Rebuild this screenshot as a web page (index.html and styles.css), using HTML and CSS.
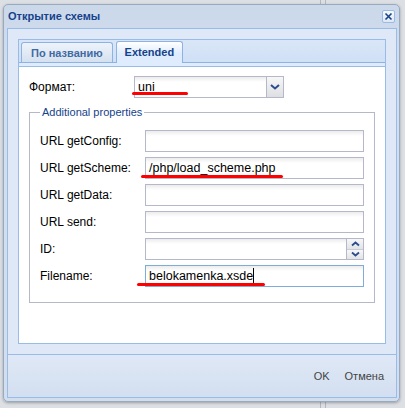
FILE: index.html
```html
<!DOCTYPE html>
<html lang="ru">
<head>
<meta charset="utf-8">
<title>Открытие схемы</title>
<link rel="stylesheet" href="styles.css">
</head>
<body>
<div class="win">
  <div class="win-hd">
    <span class="win-title">Открытие схемы</span>
    <span class="tool-close"><svg width="11" height="11" viewBox="0 0 11 11"><path d="M2.5 2.5 L8.5 8.5 M8.5 2.5 L2.5 8.5" stroke="#15428b" stroke-width="1.6" fill="none"/></svg></span>
  </div>
  <div class="win-panel">
    <div class="win-body">
      <div class="tabpanel">
        <div class="tab-hd">
          <div class="tab-strip">
            <div class="tab">По названию</div>
            <div class="tab active">Extended</div>
          </div>
          <div class="tab-spacer"></div>
        </div>
        <div class="tab-body">
          <div class="form-row">
            <span class="lbl">Формат:</span>
            <div class="combo">
              <div class="field combo-input">uni<span class="mark mark-uni"></span></div>
              <div class="trigger"><svg width="10" height="6" viewBox="0 0 10 6"><path d="M1 1 L5 4.5 L9 1" stroke="#2c4c8c" stroke-width="2" fill="none"/></svg></div>
            </div>
          </div>
          <fieldset class="fs">
            <legend>Additional properties</legend>
            <div class="fs-row"><span class="lbl">URL getConfig:</span><div class="field"></div></div>
            <div class="fs-row"><span class="lbl">URL getScheme:</span><div class="field">/php/load_scheme.php<span class="mark mark-scheme"></span></div></div>
            <div class="fs-row"><span class="lbl">URL getData:</span><div class="field"></div></div>
            <div class="fs-row"><span class="lbl">URL send:</span><div class="field"></div></div>
            <div class="fs-row"><span class="lbl">ID:</span>
              <div class="spin">
                <div class="field spin-input"></div>
                <div class="spin-btns">
                  <div class="spin-btn"><svg width="9" height="6" viewBox="0 0 9 6"><path d="M1 4.5 L4.5 1.5 L8 4.5" stroke="#2c4c8c" stroke-width="1.8" fill="none"/></svg></div>
                  <div class="spin-btn down"><svg width="9" height="6" viewBox="0 0 9 6"><path d="M1 1.5 L4.5 4.5 L8 1.5" stroke="#2c4c8c" stroke-width="1.8" fill="none"/></svg></div>
                </div>
              </div>
            </div>
            <div class="fs-row"><span class="lbl">Filename:</span><div class="field focus">belokamenka.xsde<span class="caret"></span><span class="mark mark-file"></span></div></div>
          </fieldset>
        </div>
      </div>
    </div>
    <div class="win-footer">
      <span class="btn">OK</span>
      <span class="btn">Отмена</span>
    </div>
  </div>
</div>
</body>
</html>
```

FILE: styles.css
```css
* { box-sizing: border-box; }
html, body { margin: 0; padding: 0; }
body {
  width: 405px;
  height: 408px;
  overflow: hidden;
  padding: 4px 0 0 3px;
  font-family: "Liberation Sans", Arial, sans-serif;
  background-color: #dcdfe4;
  background-image:
    linear-gradient(90deg, transparent 320px, #b3b9c1 320px, #b3b9c1 321px, transparent 321px, transparent 325px, #b3b9c1 325px, #b3b9c1 326px, transparent 326px);
}

.win {
  width: 397px;
  height: 398px;
  border: 1px solid #99a9be;
  border-radius: 5px;
  background: linear-gradient(#cbd8ea, #d2deee 60px, #d2deee);
  box-shadow: 0 1px 3px rgba(0, 0, 0, 0.3);
  padding: 0 2px 3px 3px;
  display: flex;
  flex-direction: column;
}

.win-hd {
  height: 23px;
  display: flex;
  align-items: center;
  justify-content: space-between;
  padding: 0 2px 1px 1px;
}
.win-title {
  font-weight: bold;
  font-size: 11px;
  color: #15428b;
}
.tool-close {
  width: 13px;
  height: 13px;
  border: 1px solid #99bbe8;
  border-radius: 2px;
  background: linear-gradient(#f6f9fc, #dde7f3);
  display: flex;
  align-items: center;
  justify-content: center;
}

.win-panel {
  height: 370px;
  border: 1px solid #99bbe8;
  background: #dfe8f6;
  display: flex;
  flex-direction: column;
}
.win-body { padding: 10px; }

.tabpanel { width: 368px; }
.tab-hd {
  border: 1px solid #99bbe8;
  border-bottom: 0;
  padding-top: 1px;
  background: linear-gradient(#d9e6f7, #cedff5);
}
.tab-strip {
  height: 22px;
  display: flex;
  align-items: flex-end;
  gap: 3px;
  padding-left: 2px;
  border-bottom: 1px solid #8db2e3;
}
.tab {
  height: 20px;
  padding: 0 9px;
  border: 1px solid #8db2e3;
  border-bottom: 0;
  border-radius: 3px 3px 0 0;
  background: linear-gradient(#eef3fa, #d5e1f0);
  font-weight: bold;
  font-size: 11px;
  color: #416aa3;
  display: flex;
  align-items: center;
}
.tab.active {
  height: 22px;
  margin-bottom: -1px;
  padding: 0 8px 1px;
  background: linear-gradient(#ffffff, #deecfd 12px);
  color: #15428b;
}
.tab-spacer {
  height: 3px;
  background: #deecfd;
}
.tab-body {
  height: 278px;
  border: 1px solid #99bbe8;
  background: #fff;
  padding: 9px 10px 0;
}

.form-row, .fs-row {
  height: 22px;
  display: flex;
  align-items: center;
}
.fs-row + .fs-row { margin-top: 5px; }
.lbl {
  width: 105px;
  flex: none;
  font-size: 12px;
  color: #000;
}

.field {
  position: relative;
  width: 219px;
  height: 22px;
  border: 1px solid #b5b8c8;
  background: linear-gradient(#ececec, #ffffff 5px);
  padding: 0 3px;
  font-size: 12.5px;
  line-height: 20px;
  color: #000;
  white-space: nowrap;
}
.field.focus { border-color: #7eadd9; }
.caret {
  display: inline-block;
  width: 1px;
  height: 15px;
  background: #000;
  vertical-align: -3px;
}

.combo { display: flex; }
.combo-input {
  width: 132px;
  border-right: 0;
}
.trigger {
  width: 18px;
  height: 22px;
  border: 1px solid #b5b8c8;
  background: linear-gradient(#f7f7f7, #dedfe3);
  display: flex;
  align-items: center;
  justify-content: center;
}

.spin { display: flex; }
.spin-input {
  width: 201px;
  border-right: 0;
}
.spin-btns {
  width: 18px;
  height: 22px;
  border: 1px solid #b5b8c8;
  display: flex;
  flex-direction: column;
}
.spin-btn {
  flex: 1;
  background: linear-gradient(#f7f7f7, #e2e3e6);
  display: flex;
  align-items: center;
  justify-content: center;
}
.spin-btn.down { border-top: 1px solid #c9ccd6; }

.fs {
  margin: 7px 0 0;
  padding: 10px 10px 15px;
  border: 1px solid #b5b8c8;
  min-width: 0;
}
.fs legend {
  padding: 0 2px;
  font-size: 11px;
  line-height: 15px;
  color: #15428b;
}

.mark {
  position: absolute;
  height: 3px;
  background: #f00;
  border-radius: 1.5px;
}
.mark-uni { left: -3px; top: 15px; width: 56px; }
.mark-scheme { left: -5px; top: 17px; width: 142px; }
.mark-file { left: -9px; top: 17px; width: 128px; }

.win-footer {
  flex: 1;
  border-top: 1px solid #99bbe8;
  background: linear-gradient(#dfe8f6, #d2dff0);
  display: flex;
  justify-content: flex-end;
  align-items: center;
  gap: 15px;
  padding-right: 12px;
  font-size: 11px;
  color: #444;
}
```
